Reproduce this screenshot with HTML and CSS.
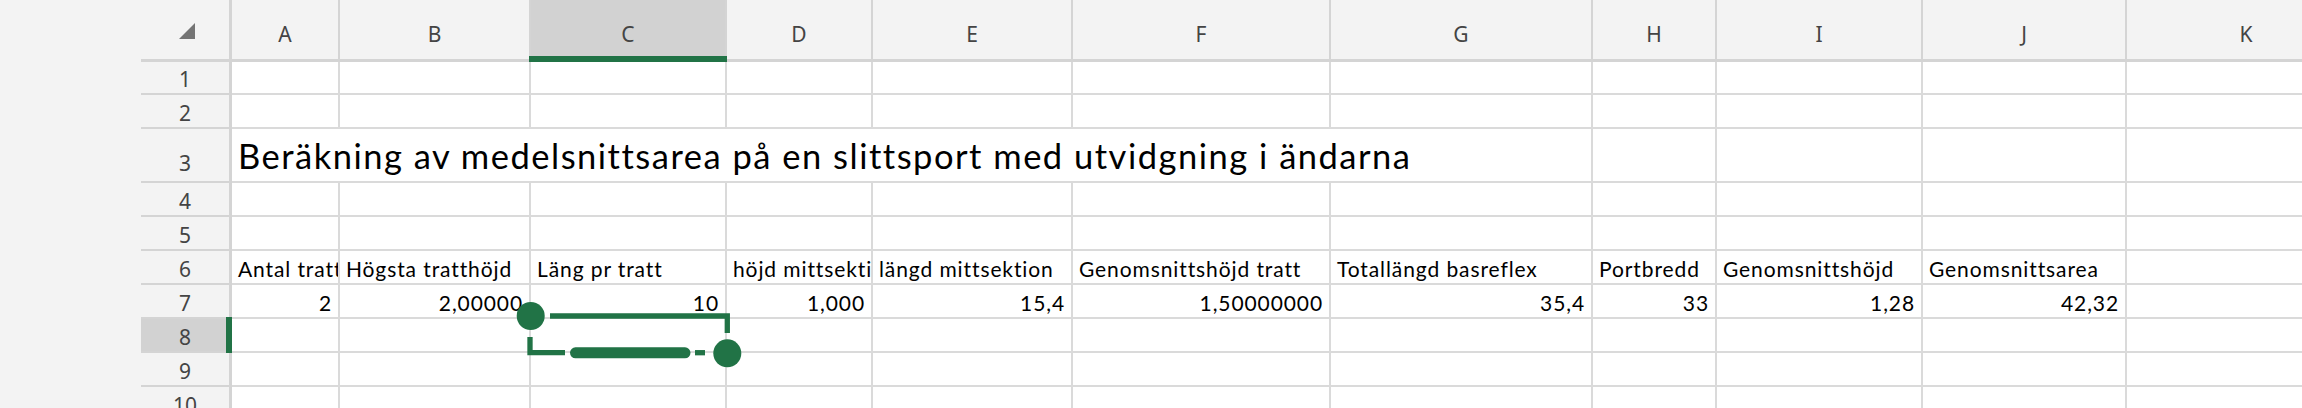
FILE: index.html
```html
<!DOCTYPE html>
<html lang="sv">
<head>
    <meta charset="UTF-8">
    <title>Slitsport</title>
    <link rel="stylesheet" href="styles.css">
</head>
<body>
    <div class="app">
        <div class="side"></div>
        <div class="sheet">
            <!-- column headers -->
            <div class="corner">
                <svg width="16" height="16" viewBox="0 0 16 16"><polygon points="16,0 16,16 0,16" fill="#747474"/></svg>
            </div>
            <div class="ch">A</div>
            <div class="ch">B</div>
            <div class="ch sel">C</div>
            <div class="ch">D</div>
            <div class="ch">E</div>
            <div class="ch">F</div>
            <div class="ch">G</div>
            <div class="ch">H</div>
            <div class="ch">I</div>
            <div class="ch">J</div>
            <div class="ch">K</div>

            <!-- row 1 -->
            <div class="rh">1</div>
            <div class="c"></div><div class="c"></div><div class="c"></div><div class="c"></div><div class="c"></div><div class="c"></div>
            <div class="c"></div><div class="c"></div><div class="c"></div><div class="c"></div><div class="c"></div>

            <!-- row 2 -->
            <div class="rh">2</div>
            <div class="c"></div><div class="c"></div><div class="c"></div><div class="c"></div><div class="c"></div><div class="c"></div>
            <div class="c"></div><div class="c"></div><div class="c"></div><div class="c"></div><div class="c"></div>

            <!-- row 3 -->
            <div class="rh rh-tall">3</div>
            <div class="c title">Beräkning av medelsnittsarea på en slittsport med utvidgning i ändarna</div>
            <div class="c"></div><div class="c"></div><div class="c"></div><div class="c"></div>

            <!-- row 4 -->
            <div class="rh">4</div>
            <div class="c"></div><div class="c"></div><div class="c"></div><div class="c"></div><div class="c"></div><div class="c"></div>
            <div class="c"></div><div class="c"></div><div class="c"></div><div class="c"></div><div class="c"></div>

            <!-- row 5 -->
            <div class="rh">5</div>
            <div class="c"></div><div class="c"></div><div class="c"></div><div class="c"></div><div class="c"></div><div class="c"></div>
            <div class="c"></div><div class="c"></div><div class="c"></div><div class="c"></div><div class="c"></div>

            <!-- row 6 -->
            <div class="rh">6</div>
            <div class="c">Antal tratt</div>
            <div class="c">Högsta tratthöjd</div>
            <div class="c">Läng pr tratt</div>
            <div class="c">höjd mittsektion</div>
            <div class="c">längd mittsektion</div>
            <div class="c">Genomsnittshöjd tratt</div>
            <div class="c">Totallängd basreflex</div>
            <div class="c">Portbredd</div>
            <div class="c">Genomsnittshöjd</div>
            <div class="c">Genomsnittsarea</div>
            <div class="c"></div>

            <!-- row 7 -->
            <div class="rh">7</div>
            <div class="c num">2</div>
            <div class="c num">2,00000</div>
            <div class="c num">10</div>
            <div class="c num">1,000</div>
            <div class="c num">15,4</div>
            <div class="c num">1,50000000</div>
            <div class="c num">35,4</div>
            <div class="c num">33</div>
            <div class="c num">1,28</div>
            <div class="c num">42,32</div>
            <div class="c"></div>

            <!-- row 8 -->
            <div class="rh sel">8</div>
            <div class="c"></div><div class="c"></div><div class="c"></div><div class="c"></div><div class="c"></div><div class="c"></div>
            <div class="c"></div><div class="c"></div><div class="c"></div><div class="c"></div><div class="c"></div>

            <!-- row 9 -->
            <div class="rh">9</div>
            <div class="c"></div><div class="c"></div><div class="c"></div><div class="c"></div><div class="c"></div><div class="c"></div>
            <div class="c"></div><div class="c"></div><div class="c"></div><div class="c"></div><div class="c"></div>

            <!-- row 10 -->
            <div class="rh">10</div>
            <div class="c"></div><div class="c"></div><div class="c"></div><div class="c"></div><div class="c"></div><div class="c"></div>
            <div class="c"></div><div class="c"></div><div class="c"></div><div class="c"></div><div class="c"></div>

            <!-- selection handles on C8 -->
            <svg class="selection" width="260" height="80" viewBox="0 0 260 80">
                <g fill="none" stroke="#217346" stroke-width="5.3">
                    <path d="M50 26H227.3V43"/>
                    <path d="M30 47V62.7H65"/>
                    <path d="M195 62.7H205"/>
                </g>
                <path d="M75.5 62.8H185" stroke="#217346" stroke-width="11" stroke-linecap="round"/>
                <circle cx="30.7" cy="26" r="14" fill="#217346"/>
                <circle cx="227.3" cy="63.3" r="14" fill="#217346"/>
            </svg>
        </div>
    </div>
</body>
</html>
```

FILE: styles.css
```css
body {
    margin: 0;
    height: 408px;
    overflow: hidden;
    background: #f3f3f3;
    font-family: Lato, "Open Sans", sans-serif;
}
.app {
    display: flex;
    height: 408px;
}
.side {
    width: 141px;
    flex: none;
}
.sheet {
    position: relative;
    flex: none;
    display: grid;
    grid-template-columns: 91px 108px 191px 196px 146px 200px 258px 262px 124px 206px 204px 240px;
    grid-template-rows: 62px 33px 34px 54px repeat(7, 34px);
    background: #fff;
}
.corner {
    background: #f3f3f3;
    border-right: 3px solid #d4d4d4;
    border-bottom: 3px solid #d4d4d4;
    display: flex;
    align-items: center;
    justify-content: center;
    padding: 3px 0 0 3px;
}
.ch {
    background: #f3f3f3;
    border-right: 2px solid #d4d4d4;
    border-bottom: 3px solid #d4d4d4;
    display: flex;
    justify-content: center;
    align-items: flex-end;
    padding-bottom: 11px;
    font-family: "Noto Sans", sans-serif;
    font-size: 21px;
    color: #444;
}
.ch.sel {
    background: #d2d2d2;
    position: relative;
}
.ch.sel::after {
    content: '';
    position: absolute;
    left: -2px;
    right: -2px;
    bottom: -3px;
    height: 6px;
    background: #217346;
}
.rh {
    background: #f3f3f3;
    border-right: 3px solid #d4d4d4;
    border-bottom: 2px solid #d4d4d4;
    display: flex;
    justify-content: center;
    align-items: flex-end;
    font-family: "Noto Sans", sans-serif;
    font-size: 21px;
    color: #444;
}
.rh-tall {
    padding-bottom: 4px;
}
.rh.sel {
    background: #d2d2d2;
    position: relative;
}
.rh.sel::after {
    content: '';
    position: absolute;
    right: -3px;
    top: -2px;
    bottom: -2px;
    width: 6px;
    background: #217346;
}
.c {
    min-width: 0;
    border-right: 2px solid #dadada;
    border-bottom: 2px solid #dadada;
    display: flex;
    align-items: flex-end;
    padding: 0 6px 2px;
    overflow: hidden;
    white-space: nowrap;
    font-size: 21px;
    letter-spacing: 0.9px;
    color: #000;
}
.c.num {
    justify-content: flex-end;
}
.c.title {
    grid-column: span 7;
    font-size: 34.5px;
    letter-spacing: 1.5px;
    padding-bottom: 5px;
}
.selection {
    position: absolute;
    left: 359px;
    top: 290px;
}
```
